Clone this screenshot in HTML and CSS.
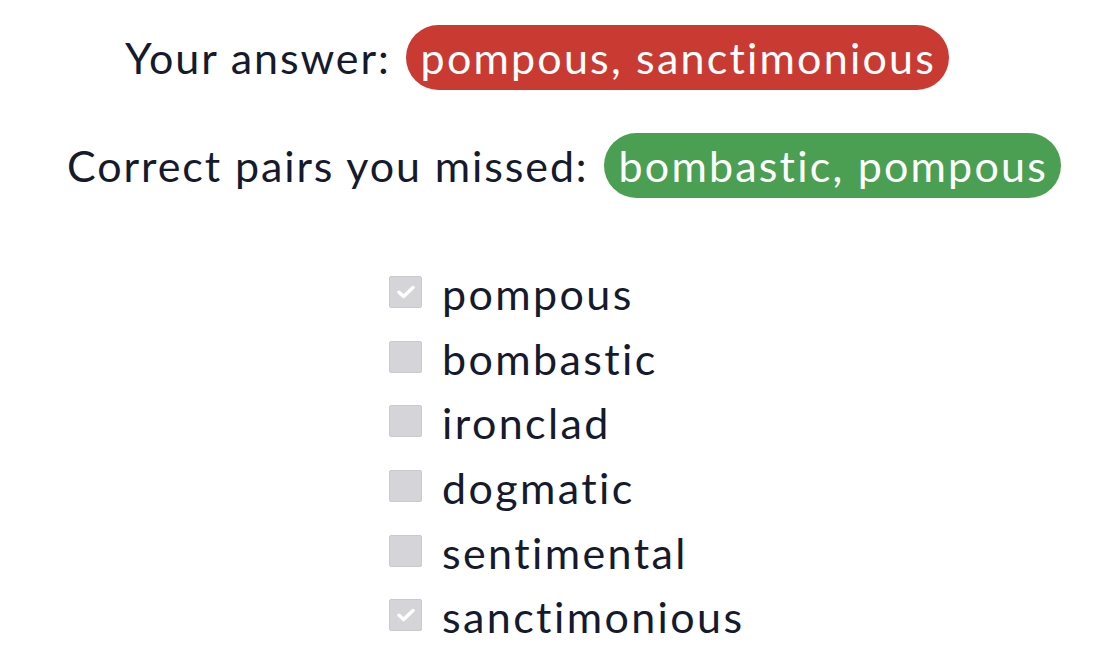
FILE: index.html
```html
<!DOCTYPE html>
<html lang="en">
<head>
<meta charset="utf-8">
<title>Answer review</title>
<link rel="stylesheet" href="styles.css">
</head>
<body>
<main class="review">
  <div class="result result-answer">
    <span class="label">Your answer:</span>
    <span class="pill pill-wrong">pompous, sanctimonious</span>
  </div>
  <div class="result result-missed">
    <span class="label">Correct pairs you missed:</span>
    <span class="pill pill-right">bombastic, pompous</span>
  </div>
  <ul class="options">
    <li class="option"><span class="box checked"><svg viewBox="0 0 18 14" width="18" height="14"><path d="M2 7.2 L6.6 11.5 L16 2.5" fill="none" stroke="#fff" stroke-width="3.4" stroke-linecap="round" stroke-linejoin="round"/></svg></span><span class="word">pompous</span></li>
    <li class="option"><span class="box"></span><span class="word">bombastic</span></li>
    <li class="option"><span class="box"></span><span class="word">ironclad</span></li>
    <li class="option"><span class="box"></span><span class="word">dogmatic</span></li>
    <li class="option"><span class="box"></span><span class="word">sentimental</span></li>
    <li class="option"><span class="box checked"><svg viewBox="0 0 18 14" width="18" height="14"><path d="M2 7.2 L6.6 11.5 L16 2.5" fill="none" stroke="#fff" stroke-width="3.4" stroke-linecap="round" stroke-linejoin="round"/></svg></span><span class="word">sanctimonious</span></li>
  </ul>
</main>
</body>
</html>
```
FILE: styles.css
```css
html, body {
  margin: 0;
  padding: 0;
  background: #ffffff;
}
body {
  font-family: "Lato", "Liberation Sans", sans-serif;
  color: #151a2c;
}
.review {
  padding-top: 25px;
}
.result {
  display: flex;
  align-items: center;
  gap: 15px;
  height: 65px;
  font-size: 43px;
}
.result-answer {
  padding-left: 125px;
}
.result-missed {
  margin-top: 43px;
  padding-left: 67px;
}
.label {
  white-space: nowrap;
  letter-spacing: 1.9px;
}
.pill {
  display: flex;
  align-items: center;
  height: 65px;
  padding: 0 13px 0 15px;
  border-radius: 33px;
  color: #ffffff;
  white-space: nowrap;
  box-sizing: border-box;
  letter-spacing: 2.2px;
}
.pill-wrong {
  background: #c93a33;
}
.pill-right {
  background: #4b9f53;
}
.options {
  list-style: none;
  margin: 62px 0 0 0;
  padding: 0 0 0 389px;
}
.option {
  display: flex;
  align-items: center;
  gap: 20px;
  height: 64.6px;
  font-size: 43px;
  letter-spacing: 2.4px;
}
.box {
  width: 33px;
  height: 32px;
  box-sizing: border-box;
  background: #d5d5d9;
  border: 1px solid #c9c9ce;
  border-radius: 2px;
  display: flex;
  align-items: center;
  justify-content: center;
  flex: none;
}
.word {
  line-height: 1;
  padding-top: 3px;
}
```
